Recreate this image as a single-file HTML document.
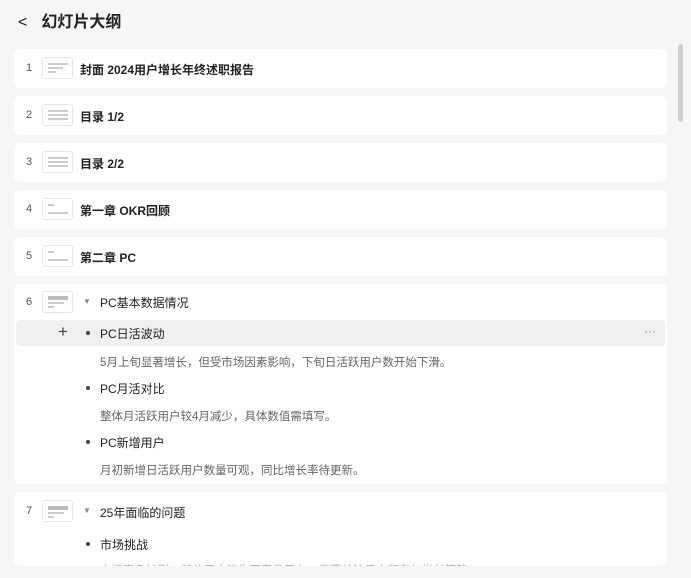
<!DOCTYPE html>
<html><head><meta charset="utf-8"><style>
*{margin:0;padding:0;box-sizing:border-box}
body{width:691px;height:578px;overflow:hidden;background:#f6f6f6;font-family:"Liberation Sans","Noto Sans CJK SC",sans-serif;position:relative;color:#222}
.hdr{position:absolute;left:18px;top:8px;font-size:16px;font-weight:bold;color:#222}
.hdr span{display:inline-block;margin-right:14px;font-weight:normal}
.card{position:absolute;left:14px;width:653px;background:#fff;border-radius:6px}
.num{position:absolute;left:12px;font-size:11px;color:#555}
.th{position:absolute;left:28px;width:31px;height:22px;border:1px solid #e6e6e6;border-radius:3px;background:#fff}
.th i{position:absolute;left:5px;height:2px;background:#ccc}
.t{position:absolute;left:66px;font-size:12px;font-weight:bold}
.r{position:absolute;font-size:12px;color:#222}
.d{position:absolute;left:86px;font-size:11.5px;color:#666}
.b{position:absolute;left:72px;width:4px;height:4px;border-radius:2px;background:#444}
.tri{position:absolute;left:69px;font-size:8px;color:#888}
.sb{position:absolute;left:678px;top:44px;width:5px;height:78px;background:#cfcfcf;border-radius:3px}
</style></head><body>
<div class="hdr"><span>&lt;</span>幻灯片大纲</div>
<div class="sb"></div>

<div class="card" style="top:49px;height:39px"><div class="num" style="top:13px">1</div><div class="th" style="top:8px"><i style="top:5px;width:20px"></i><i style="top:9px;width:15px"></i><i style="top:13px;width:8px"></i></div><div class="t" style="top:12px">封面 2024用户增长年终述职报告</div></div>
<div class="card" style="top:96px;height:39px"><div class="num" style="top:13px">2</div><div class="th" style="top:8px"><i style="top:5px;width:20px"></i><i style="top:9px;width:20px"></i><i style="top:13px;width:20px"></i></div><div class="t" style="top:12px">目录 1/2</div></div>
<div class="card" style="top:143px;height:39px"><div class="num" style="top:13px">3</div><div class="th" style="top:8px"><i style="top:5px;width:20px"></i><i style="top:9px;width:20px"></i><i style="top:13px;width:20px"></i></div><div class="t" style="top:12px">目录 2/2</div></div>
<div class="card" style="top:190px;height:39px"><div class="num" style="top:13px">4</div><div class="th" style="top:8px"><i style="top:5px;width:6px"></i><i style="top:13px;width:20px"></i></div><div class="t" style="top:12px">第一章 OKR回顾</div></div>
<div class="card" style="top:237px;height:39px"><div class="num" style="top:13px">5</div><div class="th" style="top:8px"><i style="top:5px;width:6px"></i><i style="top:13px;width:20px"></i></div><div class="t" style="top:12px">第二章 PC</div></div>

<div class="card" style="top:284px;height:200px">
<div class="num" style="top:12px">6</div><div class="th" style="top:7px"><i style="top:4px;width:20px;height:4px;background:#bbb"></i><i style="top:10px;width:16px"></i><i style="top:14px;width:6px"></i></div>
<div class="tri" style="top:13px">▼</div><div class="r" style="left:86px;top:10px">PC基本数据情况</div>
<div style="position:absolute;left:2px;top:36px;width:649px;height:26px;background:#f0f0f0;border-radius:4px"></div>
<div class="r" style="left:44px;top:38px;font-size:17px;color:#444">+</div>
<div class="b" style="top:47px"></div><div class="r" style="left:86px;top:41px">PC日活波动</div>
<div class="r" style="left:630px;top:40px;color:#888">···</div>
<div class="d" style="top:70px">5月上旬显著增长，但受市场因素影响，下旬日活跃用户数开始下滑。</div>
<div class="b" style="top:102px"></div><div class="r" style="left:86px;top:96px">PC月活对比</div>
<div class="d" style="top:124px">整体月活跃用户较4月减少，具体数值需填写。</div>
<div class="b" style="top:156px"></div><div class="r" style="left:86px;top:150px">PC新增用户</div>
<div class="d" style="top:178px">月初新增日活跃用户数量可观，同比增长率待更新。</div>
</div>

<div class="card" style="top:492px;height:74px;overflow:hidden">
<div class="num" style="top:13px">7</div><div class="th" style="top:8px"><i style="top:5px;width:20px;height:4px;background:#bbb"></i><i style="top:11px;width:16px"></i><i style="top:15px;width:6px"></i></div>
<div class="tri" style="top:14px">▼</div><div class="r" style="left:86px;top:12px">25年面临的问题</div>
<div class="b" style="top:50px"></div><div class="r" style="left:86px;top:44px">市场挑战</div>
<div class="d" style="top:70px;color:#aaa">市场竞争加剧，部分用户流失至竞品平台，需要关注用户留存与增长策略。</div>
</div>
</body></html>
